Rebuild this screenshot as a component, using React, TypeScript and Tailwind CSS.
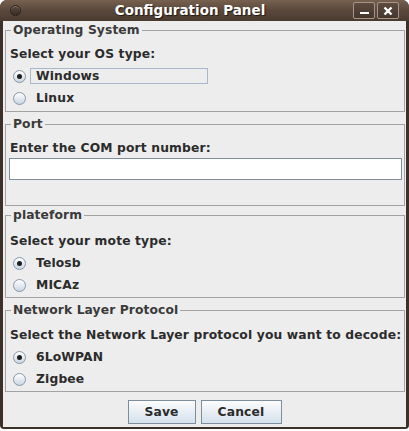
import React from "react";

const font = { fontFamily: '"DejaVu Sans", Verdana, sans-serif' };

function Radio({ label, checked, focused }: { label: string; checked?: boolean; focused?: boolean }) {
  return (
    <div className="flex h-[22px] items-center pl-[7px]">
      <span className="flex h-[13px] w-[13px] items-center justify-center rounded-full border border-[#8797a8] bg-gradient-to-b from-[#ffffff] to-[#c9d6e3]">
        {checked && <span className="h-[5px] w-[5px] rounded-full bg-[#1e1e1e]" />}
      </span>
      <span
        className={
          "ml-[4px] flex h-[16px] items-center pl-[5px] text-[12.3px] font-bold tracking-[0.15px] text-[#2b2b2b] " +
          (focused ? "w-[178px] border border-[#a6b9cc]" : "border border-transparent")
        }
      >
        {label}
      </span>
    </div>
  );
}

function Group({ title, className, children }: { title: string; className?: string; children: React.ReactNode }) {
  return (
    <fieldset className={"ml-[2px] mr-[1px] border border-[#a3a3a3] p-0 " + (className ?? "")}>
      <legend className="ml-[5px] px-[2px] text-[12.3px] font-bold leading-[16px] tracking-[0.1px] text-[#3a3a3a]">{title}</legend>
      {children}
    </fieldset>
  );
}

const labelCls = "pl-[4px] text-[12.3px] font-bold leading-[16px] tracking-[0.15px] text-[#2b2b2b]";

export default function App() {
  return (
    <div className="h-[431px] w-[409px] bg-white" style={font}>
      <div className="flex h-[429px] flex-col overflow-hidden rounded-t-[7px] rounded-b-[4px] bg-[#3d3029]">
        {/* title bar */}
        <div className="relative flex h-[21px] shrink-0 items-center bg-gradient-to-b from-[#77614f] via-[#5a483c] to-[#4a3b31] px-[10px]">
          <span className="h-[11px] w-[11px] rounded-full border border-[#2b221c] bg-gradient-to-b from-[#5a4a3f] to-[#3a2e26] shadow-[inset_0_1px_0_rgba(255,255,255,0.25)]" />
          <span className="flex-1 pl-[6px] text-center text-[13.5px] font-bold text-white [text-shadow:1px_1px_1px_#1f1712]">
            Configuration Panel
          </span>
          <div className="flex gap-[2px]">
            <span className="flex h-[17px] w-[22px] items-end justify-center rounded-[2px] border border-[#a8958a] bg-gradient-to-b from-[#5e4c41] to-[#43362d] pb-[4px]">
              <span className="h-[2px] w-[9px] bg-white" />
            </span>
            <span className="flex h-[17px] w-[22px] items-center justify-center rounded-[2px] border border-[#a8958a] bg-gradient-to-b from-[#5e4c41] to-[#43362d]">
              <svg width="10" height="10" viewBox="0 0 10 10">
                <path d="M1.5 1.5 L8.5 8.5 M8.5 1.5 L1.5 8.5" stroke="white" strokeWidth="2.4" />
              </svg>
            </span>
          </div>
        </div>

        {/* content */}
        <div className="mx-[3px] mb-[2px] flex flex-1 flex-col bg-[#ededed] pt-[1px]">
          <Group title="Operating System" className="h-[90px]">
            <div className={"mt-[8px] " + labelCls}>Select your OS type:</div>
            <div className="mt-[3px]">
              <Radio label="Windows" checked focused />
              <Radio label="Linux" />
            </div>
          </Group>

          <Group title="Port" className="mt-[4px] h-[90px]">
            <div className={"mt-[8px] " + labelCls}>Enter the COM port number:</div>
            <div className="ml-[3px] mr-[2px] mt-[2px] h-[22px] border border-[#7d8e9e] bg-white" />
          </Group>

          <Group title="plateform" className="mt-[1px] h-[91px]">
            <div className={"mt-[10px] " + labelCls}>Select your mote type:</div>
            <div className="mt-[3px]">
              <Radio label="Telosb" checked />
              <Radio label="MICAz" />
            </div>
          </Group>

          <Group title="Network Layer Protocol" className="mt-[4px] h-[90px]">
            <div className={"mt-[9px] " + labelCls}>Select the Network Layer protocol you want to decode:</div>
            <div className="mt-[3px]">
              <Radio label="6LoWPAN" checked />
              <Radio label="Zigbee" />
            </div>
          </Group>

          <div className="mt-[8px] flex justify-center gap-[5px]">
            <button className="h-[24px] w-[68px] border border-[#7d8e9e] bg-gradient-to-b from-[#fbfcfd] to-[#d5e1ec] text-[12.3px] font-bold tracking-[0.15px] text-[#2b2b2b]">
              Save
            </button>
            <button className="h-[24px] w-[81px] border border-[#7d8e9e] bg-gradient-to-b from-[#fbfcfd] to-[#d5e1ec] text-[12.3px] font-bold tracking-[0.15px] text-[#2b2b2b]">
              Cancel
            </button>
          </div>
        </div>
      </div>
    </div>
  );
}
